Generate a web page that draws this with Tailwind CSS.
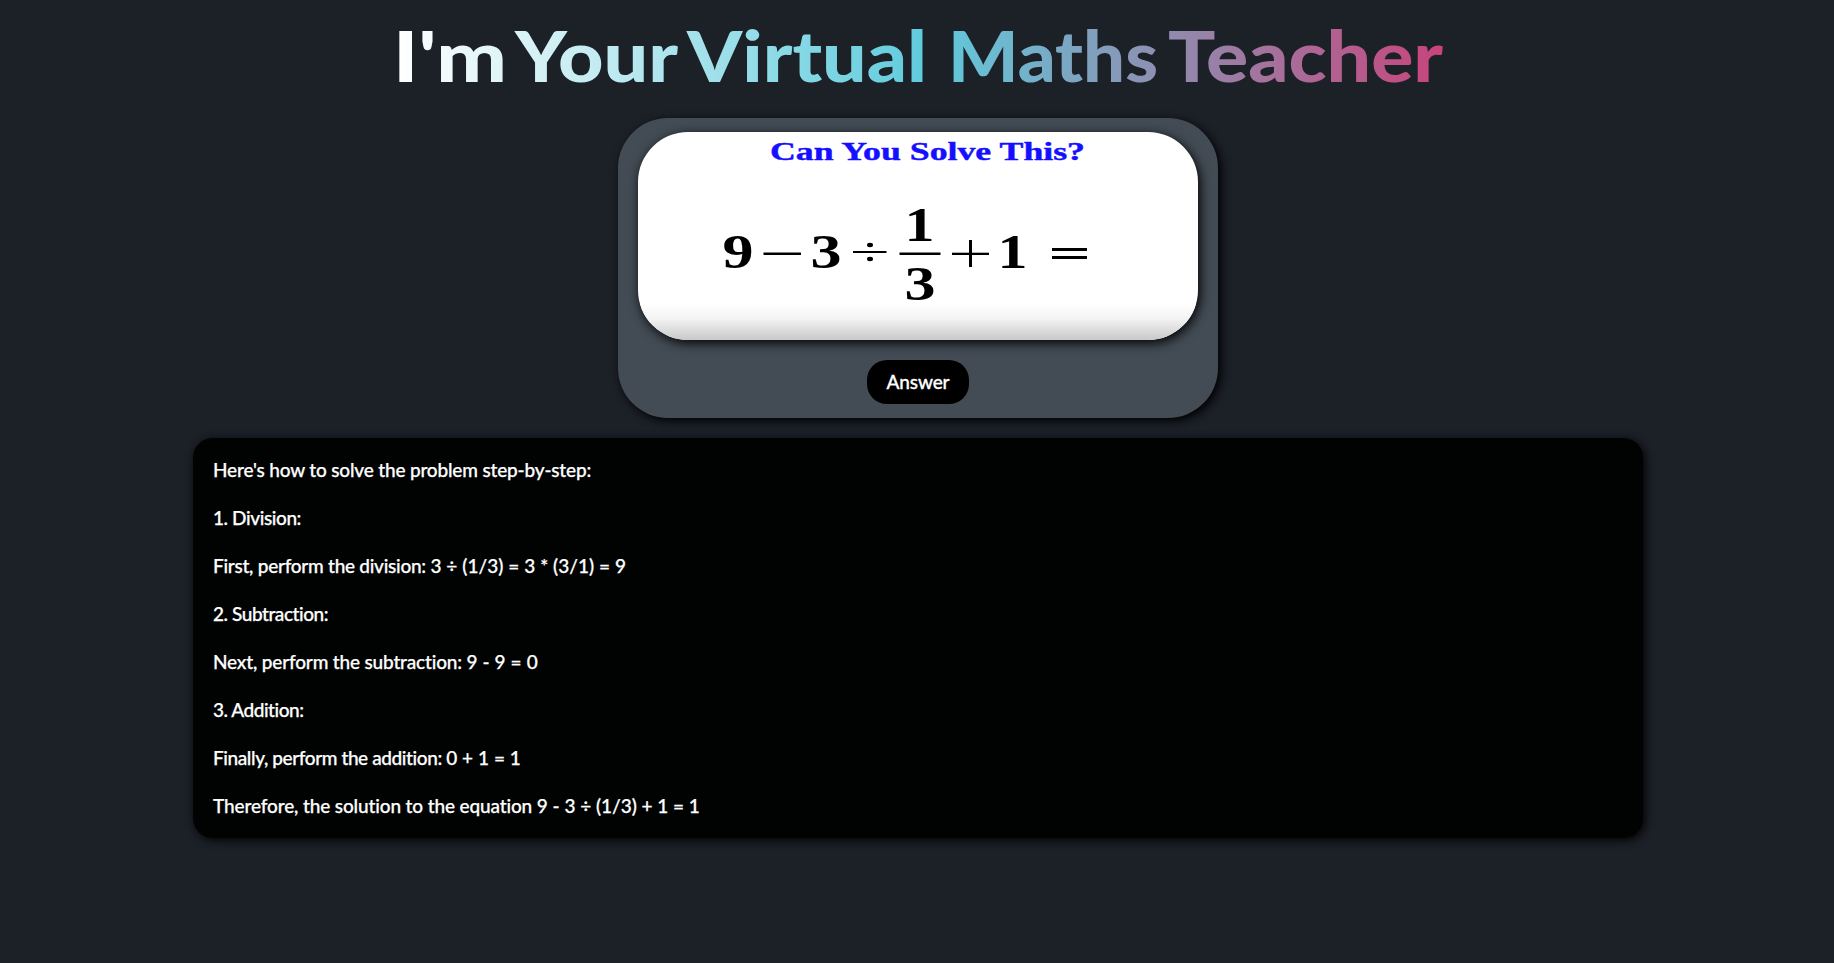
<!DOCTYPE html>
<html lang="en">
<head>
<meta charset="utf-8">
<title>Virtual Maths Teacher</title>
<script src="https://cdn.jsdelivr.net/npm/@tailwindcss/browser@4"></script>
</head>
<body class="min-h-screen overflow-hidden bg-[#1c2027] font-[Lato,sans-serif] text-white">
<main class="flex flex-col items-center">
  <h1 class="h-[118px] w-full">
    <svg class="block h-[118px] w-full font-black" viewBox="0 0 1834 118" font-size="69.5">
      <defs>
        <linearGradient id="title" gradientUnits="userSpaceOnUse" x1="397" y1="0" x2="1460" y2="0">
          <stop offset="0" stop-color="#ffffff"/><stop offset=".5" stop-color="#5fcbdc"/><stop offset="1" stop-color="#cb4079"/>
        </linearGradient>
      </defs>
      <g fill="url(#title)">
        <text x="393" y="81.5" textLength="114" lengthAdjust="spacingAndGlyphs">I'm</text>
        <text x="515" y="81.5" textLength="163" lengthAdjust="spacingAndGlyphs">Your</text>
        <text x="687" y="81.5" textLength="240" lengthAdjust="spacingAndGlyphs">Virtual</text>
        <text x="948" y="81.5" textLength="210" lengthAdjust="spacingAndGlyphs">Maths</text>
        <text x="1168" y="81.5" textLength="275" lengthAdjust="spacingAndGlyphs">Teacher</text>
      </g>
    </svg>
  </h1>
  <div class="flex w-full flex-col items-center pl-0.5">
  <section class="flex h-[300px] w-[600px] flex-col items-center rounded-[50px] bg-[#434c55] pt-3.5 shadow-[3px_3px_10px_#000]">
    <div class="h-[208px] w-[560px] overflow-hidden rounded-[50px] bg-white shadow-[2px_3px_12px_#000]">
      <svg class="block h-[208px] w-[560px] font-bold" viewBox="638 132 560 208" font-family="Liberation Serif, serif" font-size="48">
        <defs>
          <linearGradient id="fade" x1="0" y1="0" x2="0" y2="1">
            <stop offset="0" stop-color="#fff"/><stop offset=".4" stop-color="#f3f3f3"/><stop offset="1" stop-color="#c9c9c9"/>
          </linearGradient>
        </defs>
        <rect x="638" y="304" width="560" height="36" fill="url(#fade)"/>
        <text x="770" y="159.5" font-size="24.5" fill="#1410ff" stroke="#1410ff" stroke-width=".4" textLength="315" lengthAdjust="spacingAndGlyphs">Can You Solve This?</text>
        <text x="722.5" y="267.5" textLength="31" lengthAdjust="spacingAndGlyphs">9</text>
        <text x="810.5" y="267.5" textLength="31" lengthAdjust="spacingAndGlyphs">3</text>
        <text x="904.5" y="240.5" textLength="30" lengthAdjust="spacingAndGlyphs">1</text>
        <text x="904.5" y="299.5" textLength="31" lengthAdjust="spacingAndGlyphs">3</text>
        <text x="997.5" y="267.5" textLength="30" lengthAdjust="spacingAndGlyphs">1</text>
        <rect x="763.5" y="252.5" width="37.5" height="2.5"/>
        <rect x="853" y="251" width="33.5" height="2"/>
        <ellipse cx="870" cy="245" rx="3" ry="2.2"/><ellipse cx="870" cy="259" rx="3" ry="2.2"/>
        <rect x="899.5" y="252.5" width="41" height="2.5"/>
        <rect x="952" y="252.7" width="37" height="2.3"/><rect x="969" y="240" width="3" height="27"/>
        <rect x="1052" y="248" width="35" height="3"/><rect x="1052" y="256" width="35" height="3"/>
      </svg>
    </div>
    <button class="mt-5 h-11 w-[102px] rounded-[20px] bg-black pt-px text-[19px] font-medium tracking-[-0.15px] [-webkit-text-stroke:0.3px_white]">Answer</button>
  </section>
  <section class="mt-5 flex h-[400px] w-[1450px] flex-col rounded-[20px] bg-[#010302] px-5 pt-2 text-[19px] leading-[48px] font-medium shadow-[2px_2px_10px_#000] [-webkit-text-stroke:0.25px_white]">
    <p class="tracking-[-0.17px]">Here's how to solve the problem step-by-step:</p>
    <p class="tracking-[-0.4px]">1. Division:</p>
    <p class="tracking-[0.05px]"><span class="tracking-[-0.26px]">First, perform the division: </span>3 ÷ (1/3) = 3 * (3/1) = 9</p>
    <p class="tracking-[-0.43px]">2. Subtraction:</p>
    <p class="tracking-[0.1px]"><span class="tracking-[-0.17px]">Next, perform the subtraction: </span>9 - 9 = 0</p>
    <p class="tracking-[-0.47px]">3. Addition:</p>
    <p class="tracking-[0.05px]"><span class="tracking-[-0.4px]">Finally, perform the addition: </span>0 + 1 = 1</p>
    <p class="tracking-[-0.02px]"><span class="tracking-[-0.13px]">Therefore, the solution to the equation </span>9 - 3 ÷ (1/3) + 1 = 1</p>
  </section>
  </div>
</main>
</body>
</html>
